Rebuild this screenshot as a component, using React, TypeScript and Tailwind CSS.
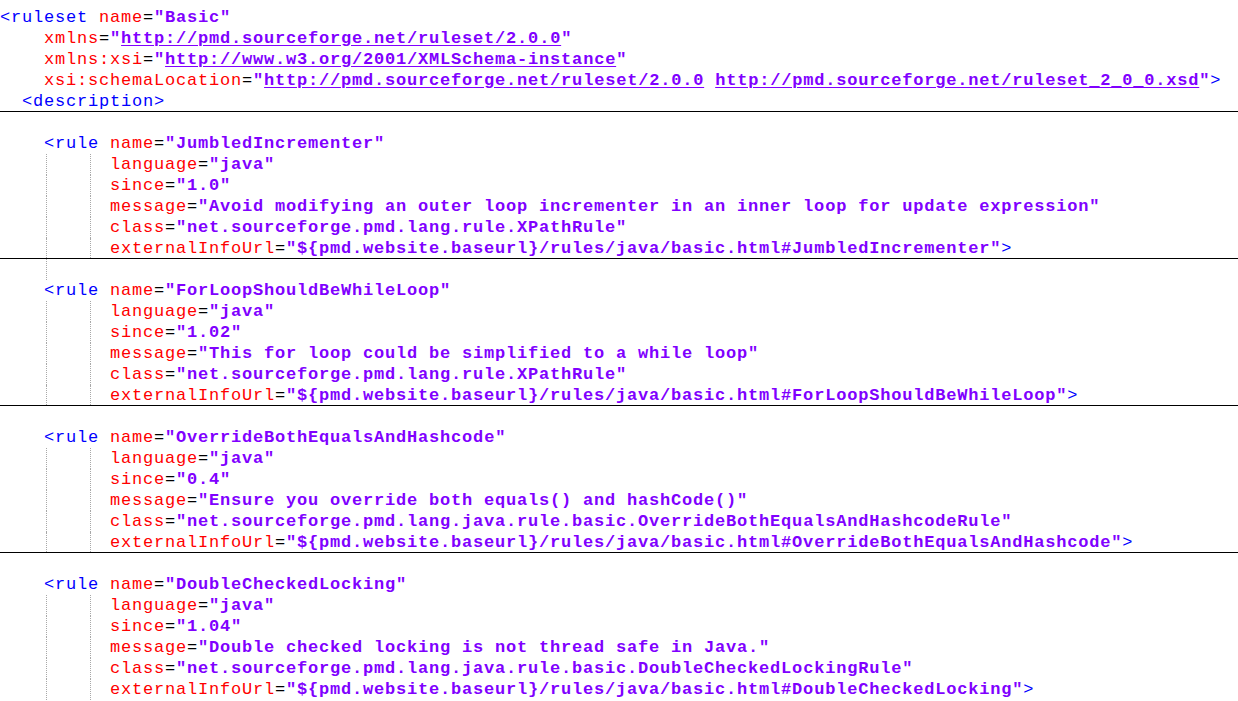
import React from "react";

type Seg = [string, string];

// t = tag, a = attribute, e = equals, v = value, u = linked value, s = plain
const styles: Record<string, string> = {
  t: "text-[#0000ff]",
  a: "text-[#ff0000]",
  e: "text-black",
  v: "text-[#8000ff] font-bold",
  u: "text-[#8000ff] font-bold underline underline-offset-2",
  s: "",
};

function Text({ segs }: { segs: Seg[] }) {
  return (
    <span>
      {segs.map(([k, s], i) => (
        <span key={i} className={styles[k]}>
          {s}
        </span>
      ))}
    </span>
  );
}

function Row({
  segs = [],
  guides = 0,
  folded = false,
}: {
  segs?: Seg[];
  guides?: number;
  folded?: boolean;
}) {
  return (
    <div
      className={`flex h-[21px] leading-[21px] whitespace-pre ${
        folded ? "border-b border-black" : ""
      }`}
    >
      {guides > 0 && <span className="w-[46px] shrink-0" />}
      {guides > 0 && (
        <span
          className={`shrink-0 border-l border-dotted border-[#a8a8a8] ${
            guides > 1 ? "w-[44px]" : "w-px"
          }`}
        />
      )}
      {guides > 1 && (
        <span className="w-[20px] shrink-0 border-l border-dotted border-[#a8a8a8]" />
      )}
      <Text segs={segs} />
    </div>
  );
}

function attr(name: string, value: string): Seg[] {
  return [
    ["a", name],
    ["e", "="],
    ["v", `"${value}"`],
  ];
}

function Rule({
  name,
  since,
  message,
  cls,
  gapGuide = false,
  folded = true,
}: {
  name: string;
  since: string;
  message: string;
  cls: string;
  gapGuide?: boolean;
  folded?: boolean;
}) {
  return (
    <>
      <Row guides={gapGuide ? 1 : 0} />
      <Row segs={[["s", "    "], ["t", "<rule"], ["s", " "], ...attr("name", name)]} />
      <Row guides={2} segs={attr("language", "java")} />
      <Row guides={2} segs={attr("since", since)} />
      <Row guides={2} segs={attr("message", message)} />
      <Row guides={2} segs={attr("class", cls)} />
      <Row
        guides={2}
        folded={folded}
        segs={[
          ["a", "externalInfoUrl"],
          ["e", "="],
          ["v", `"\${pmd.website.baseurl}/rules/java/basic.html#${name}"`],
          ["t", ">"],
        ]}
      />
    </>
  );
}

export default function App() {
  return (
    <div className="w-[1238px] h-[701px] overflow-hidden bg-white pt-[7px] font-['Liberation_Mono',monospace] text-[17px] tracking-[0.8px]">
      <Row segs={[["t", "<ruleset"], ["s", " "], ...attr("name", "Basic")]} />
      <Row
        segs={[
          ["s", "    "],
          ["a", "xmlns"],
          ["e", "="],
          ["v", '"'],
          ["u", "http://pmd.sourceforge.net/ruleset/2.0.0"],
          ["v", '"'],
        ]}
      />
      <Row
        segs={[
          ["s", "    "],
          ["a", "xmlns:xsi"],
          ["e", "="],
          ["v", '"'],
          ["u", "http://www.w3.org/2001/XMLSchema-instance"],
          ["v", '"'],
        ]}
      />
      <Row
        segs={[
          ["s", "    "],
          ["a", "xsi:schemaLocation"],
          ["e", "="],
          ["v", '"'],
          ["u", "http://pmd.sourceforge.net/ruleset/2.0.0"],
          ["v", " "],
          ["u", "http://pmd.sourceforge.net/ruleset_2_0_0.xsd"],
          ["v", '"'],
          ["t", ">"],
        ]}
      />
      <Row folded segs={[["s", "  "], ["t", "<description>"]]} />

      <Rule
        name="JumbledIncrementer"
        since="1.0"
        message="Avoid modifying an outer loop incrementer in an inner loop for update expression"
        cls="net.sourceforge.pmd.lang.rule.XPathRule"
      />
      <Rule
        name="ForLoopShouldBeWhileLoop"
        since="1.02"
        message="This for loop could be simplified to a while loop"
        cls="net.sourceforge.pmd.lang.rule.XPathRule"
        gapGuide
      />
      <Rule
        name="OverrideBothEqualsAndHashcode"
        since="0.4"
        message="Ensure you override both equals() and hashCode()"
        cls="net.sourceforge.pmd.lang.java.rule.basic.OverrideBothEqualsAndHashcodeRule"
      />
      <Rule
        name="DoubleCheckedLocking"
        since="1.04"
        message="Double checked locking is not thread safe in Java."
        cls="net.sourceforge.pmd.lang.java.rule.basic.DoubleCheckedLockingRule"
        folded={false}
      />
    </div>
  );
}
